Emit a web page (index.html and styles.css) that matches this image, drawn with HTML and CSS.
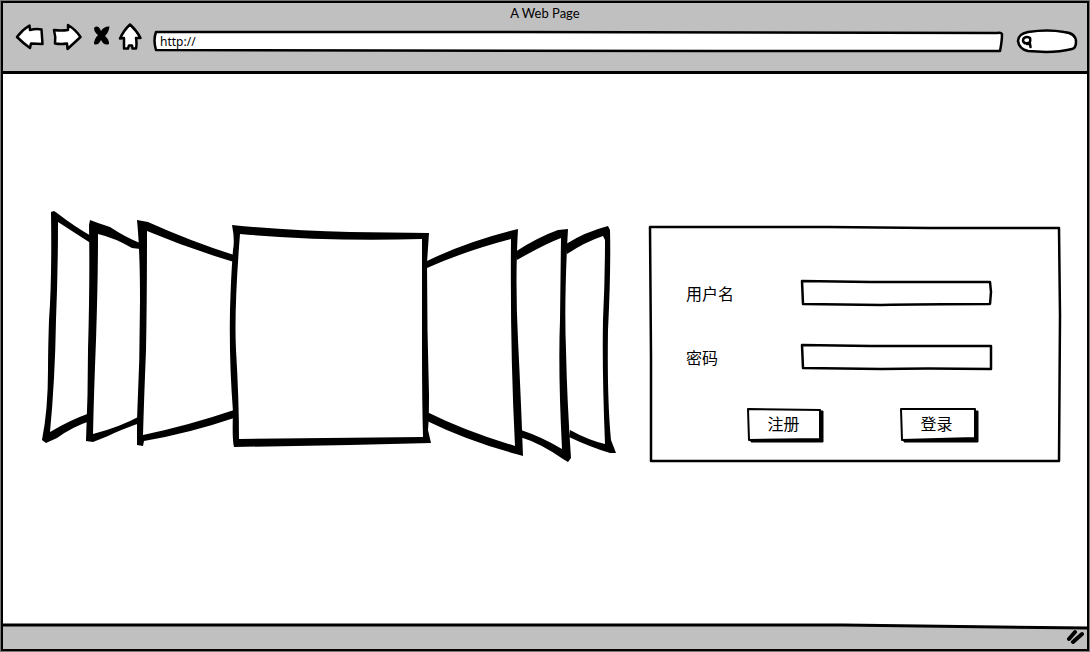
FILE: index.html
```html
<!DOCTYPE html>
<html lang="zh-CN">
<head>
<meta charset="utf-8">
<meta name="viewport" content="width=device-width, initial-scale=1">
<title>A Web Page</title>
<link rel="stylesheet" href="styles.css">
</head>
<body>
<div class="window">
  <header class="chrome">
    <div class="title">A Web Page</div>
    <div class="toolbar">
      <nav class="nav">
        <button class="nav-button" type="button" aria-label="Back">
          <svg width="36" height="36" viewBox="12 23 36 36"><path d="M17 37 Q22 30 29.500 25.500 L30 30 Q36 28.500 41.500 29.500 L42.500 44 Q37 43.500 31 43.500 L30 48 Q23 43 17 37Z"/></svg>
        </button>
        <button class="nav-button" type="button" aria-label="Forward">
          <svg width="36" height="36" viewBox="48 23 36 36"><path d="M54 30 Q61 31 68 30 L68 25 Q76 30 80.500 37 Q74 43 67.500 49 L67 43.500 Q61 44.500 55 43.500 Q56 37 54 30Z"/></svg>
        </button>
        <button class="nav-button" type="button" aria-label="Stop">
          <svg width="30" height="36" viewBox="84 23 30 36"><path class="cross" d="M94 28 Q98 24 101 31 Q104 26 109.500 26.500 Q109 32 105 36 Q109 39 109 44 Q104 46 101 40 Q98 46 94 44 Q94 39 98 35 Q94 32 94 28Z"/></svg>
        </button>
        <button class="nav-button" type="button" aria-label="Home">
          <svg width="32" height="36" viewBox="114 23 32 36"><path d="M130 24.500 Q137 31 140.500 38 L136 38 Q137 44 136 48.500 L132.500 48.500 L132 45.500 L129 45.500 L128 48.500 L124 48.500 Q124 43 124 38 L120 38.500 Q124 30 130 24.500Z"/></svg>
        </button>
      </nav>
      <div class="sketch address">
        <svg class="outline" viewBox="0 0 850 22" preserveAspectRatio="none" aria-hidden="true"><path d="M3 2 Q0 10 3 20 Q300 20 560 21 L847 21 Q849 11 849 4 Q848 2 844 3 Q500 3 300 2Z"/></svg>
        <input class="entry" type="text" value="http://" aria-label="Address">
      </div>
      <div class="sketch search">
        <svg class="outline" viewBox="0 0 62 26" preserveAspectRatio="none" aria-hidden="true"><path d="M2 13 Q2 6 12 4 Q32 1 48 4 Q60 5 60 14 Q60 20 56 21 Q44 24 30 24 L12 23 Q3 21 2 13Z"/></svg>
        <svg class="lens" width="14" height="14" viewBox="0 0 14 14" aria-hidden="true"><path d="M4 3 Q7 1 10 3 Q11 8 8 8 Q4 9 3 6 Q3 4 4 3Z M7 9 L10 9 L10.500 12"/></svg>
        <input class="entry" type="search" aria-label="Search">
      </div>
    </div>
  </header>

  <main class="page">
    <svg class="carousel" viewBox="40 208 580 270" role="img" aria-label="Carousel">
      <path d="M51 212 L54 211 L57 213 Q75 227 93 237 L93 243 L89 242 L58 222 Q58 270 56 320 Q55 380 50 432 Q70 420 90 413 L90 421 Q72 427 57 438 L46 443 L42 440 Q48 410 48 370 Q48 350 49 320 Q52 280 51 212Z"/>
      <path d="M90 220 L98 223 L110 227 Q125 237 140 243 L140 249 L132 248 Q115 238 98 234 Q98 280 96 340 Q94 390 93 434 Q120 427 140 416 L140 423 Q120 430 108 436 L93 442 L86 441 Q88 395 88 350 Q90 280 89 225Z"/>
      <path d="M137 220 L148 222 Q190 241 234 255 L234 262 Q190 249 147 231 Q147 300 146 350 Q144 400 143 435 Q190 425 234 410 L234 418 Q190 433 144 441 L143 446 L137 445 L137 420 Q140 360 140 300 Q140 250 137 220Z"/>
      <path d="M232 225 Q292 231 350 232 L429 233 L427 263 Q427 330 429 395 Q429 420 428 430 L431 443 L350 445 L234 447 Q232 440 233 412 Q229 360 230 310 Q231 275 233 250 Q235 240 232 225Z M240 234 Q234 310 236 350 Q239 400 239 439 L423 437 Q422 400 422 350 L422 239 Q330 242 240 234Z"/>
      <path d="M427 261 Q468 241 518 229 Q515 280 518 340 Q521 400 523 456 L516 454 Q468 441 427 421 L427 412 Q465 431 515 446 Q510 350 511 239 Q465 251 427 268Z"/>
      <path d="M515 252 Q538 237 558 230 L568 229 Q564 300 566 350 Q567 400 571 458 L568 462 L563 459 Q540 443 520 437 L521 430 Q542 437 562 449 Q558 370 560 320 L561 238 Q545 244 517 260Z"/>
      <path d="M566 244 Q585 232 608 226 L610 230 Q611 270 608 330 Q607 400 611 440 L616 453 L610 453 Q590 447 569 437 L570 430 Q588 440 605 444 Q602 370 603 320 Q605 280 605 240 L603 236 Q585 242 567 254Z"/>
    </svg>

    <form class="sketch login">
      <svg class="outline" viewBox="0 0 412 236" preserveAspectRatio="none" aria-hidden="true"><path d="M1 2 L180 2 L280 3 L410 3 L411 90 L410 235 L250 235 L2 235 L2 130Z"/></svg>
      <div class="field">
        <label for="username">用户名</label>
        <div class="sketch box">
          <svg class="outline" viewBox="0 0 191 26" preserveAspectRatio="none" aria-hidden="true"><path d="M1 1 L70 2 L189 2 L190 12 L189 24 Q120 24 80 25 L2 24Z"/></svg>
          <input class="entry" id="username" type="text">
        </div>
      </div>
      <div class="field">
        <label for="password">密码</label>
        <div class="sketch box">
          <svg class="outline" viewBox="0 0 191 26" preserveAspectRatio="none" aria-hidden="true"><path d="M1 1 L70 2 L190 2 L190 25 Q120 24 80 25 L2 24Z"/></svg>
          <input class="entry" id="password" type="password">
        </div>
      </div>
      <div class="actions">
        <button class="sketch action" type="button">
          <svg class="outline" viewBox="0 0 78 35" preserveAspectRatio="none" aria-hidden="true"><path class="shadow" d="M4 3 L76 3 L76 34 L4 34Z"/><path class="thin" d="M1 1 L73 2 L73 31 L2 32Z"/></svg>
          <span>注册</span>
        </button>
        <button class="sketch action" type="button">
          <svg class="outline" viewBox="0 0 78 35" preserveAspectRatio="none" aria-hidden="true"><path class="shadow" d="M4 3 L78 3 L78 34 L4 34Z"/><path class="thin" d="M1 1 L75 1 L75 30 L2 32Z"/></svg>
          <span>登录</span>
        </button>
      </div>
    </form>
  </main>

  <footer class="status">
    <svg class="rule" viewBox="0 0 1084 8" preserveAspectRatio="none" aria-hidden="true"><path class="fill" d="M0 0 L1084 0 L1084 4 L840 1 L0 1Z"/><path class="stroke" d="M0 1 L840 1 L1084 4"/></svg>
    <svg class="grip" width="18" height="16" viewBox="0 0 18 16" aria-hidden="true"><path d="M3 10 L9 3 M7 13 L16 5"/></svg>
  </footer>
</div>
</body>
</html>
```

FILE: styles.css
```css
* {
  box-sizing: border-box;
}

body {
  margin: 0;
  background: #fff;
  color: #000;
  font-family: Lato, "Noto Sans CJK SC", sans-serif;
}

.window {
  display: flex;
  flex-direction: column;
  min-height: 100vh;
  border: 3px solid #000;
  outline: 1px solid #777;
  outline-offset: -1px;
}

.chrome {
  padding-bottom: 12px;
  border-bottom: 3px solid #000;
  background: #c0c0c0;
}

.title {
  font-size: 13px;
  line-height: 20px;
  text-align: center;
}

.toolbar {
  display: flex;
  align-items: center;
  padding: 0 9px;
}

.nav {
  display: flex;
  margin-right: 7px;
}

.nav-button {
  display: block;
  padding: 0;
  border: 0;
  background: none;
}

.nav-button svg {
  display: block;
  fill: #fff;
  stroke: #000;
  stroke-width: 2.5;
  stroke-linejoin: round;
  stroke-linecap: round;
}

.nav-button .cross {
  fill: #000;
  stroke: none;
}

.sketch {
  position: relative;
}

.outline {
  position: absolute;
  inset: 0;
  width: 100%;
  height: 100%;
  overflow: visible;
  fill: #fff;
  stroke: #000;
  stroke-width: 2.5;
  stroke-linejoin: round;
}

.outline path {
  vector-effect: non-scaling-stroke;
}

.outline .thin {
  stroke-width: 2;
}

.outline .shadow {
  fill: #000;
  stroke-width: 1;
}

.entry {
  position: relative;
  display: block;
  width: 100%;
  height: 100%;
  padding: 0 7px;
  border: 0;
  outline: 0;
  background: transparent;
  color: #000;
  font-family: "Noto Sans", sans-serif;
  font-size: 12px;
}

.address {
  flex: 1;
  height: 22px;
  margin-right: 13px;
}

.search {
  width: 62px;
  height: 26px;
}

.search .entry {
  padding-left: 18px;
}

.lens {
  position: absolute;
  left: 4px;
  top: 7px;
  fill: none;
  stroke: #000;
  stroke-width: 2.5;
  stroke-linecap: round;
}

.page {
  flex: 1;
  display: grid;
  grid-template-columns: 580fr 412fr;
  gap: 29px;
  align-items: center;
  padding: 0 26px 12px 37px;
}

.carousel {
  display: block;
  width: 100%;
  fill-rule: evenodd;
}

.login {
  display: grid;
  gap: 38px;
  padding: 55px 69px 19px 37px;
  font-size: 16px;
}

.field {
  display: grid;
  grid-template-columns: 115fr 191fr;
  align-items: center;
}

.field label {
  position: relative;
  font-family: "Noto Sans CJK SC", sans-serif;
  line-height: 24px;
}

.box {
  height: 26px;
}

.actions {
  display: flex;
  justify-content: space-between;
  padding: 0 14px 0 61px;
}

.action {
  width: 78px;
  height: 35px;
  padding: 0 5px 4px 0;
  border: 0;
  background: none;
  color: #000;
  font-family: "Noto Sans CJK SC", sans-serif;
  font-size: 16px;
}

.action span {
  position: relative;
}

.status {
  position: relative;
  display: flex;
  justify-content: flex-end;
  align-items: center;
  height: 25px;
  background: #c0c0c0;
}

.rule {
  position: absolute;
  left: 0;
  top: 0;
  width: 100%;
  height: 8px;
  overflow: visible;
}

.rule path {
  vector-effect: non-scaling-stroke;
}

.rule .fill {
  fill: #fff;
}

.rule .stroke {
  fill: none;
  stroke: #000;
  stroke-width: 3;
}

.grip {
  position: relative;
  margin-right: 3px;
  fill: none;
  stroke: #000;
  stroke-width: 4;
  stroke-linecap: round;
}
```
